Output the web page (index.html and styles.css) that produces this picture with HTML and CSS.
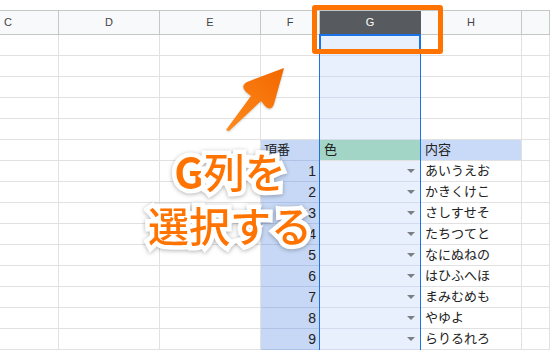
FILE: index.html
```html
<!DOCTYPE html>
<html lang="ja">
<head>
  <meta charset="UTF-8" />
  <meta name="viewport" content="width=device-width, initial-scale=1.0" />
  <title>G列を選択する</title>
  <link rel="stylesheet" href="styles.css">
</head>
<body>
  <div class="sheet">
    <div class="row head">
      <div class="cell">C</div><div class="cell">D</div><div class="cell">E</div>
      <div class="cell">F</div><div class="cell picked">G</div><div class="cell">H</div><div class="cell"></div>
    </div>
    <div class="row"><div class="cell"></div><div class="cell"></div><div class="cell"></div><div class="cell"></div><div class="cell sel"></div><div class="cell"></div><div class="cell"></div></div>
    <div class="row"><div class="cell"></div><div class="cell"></div><div class="cell"></div><div class="cell"></div><div class="cell sel"></div><div class="cell"></div><div class="cell"></div></div>
    <div class="row"><div class="cell"></div><div class="cell"></div><div class="cell"></div><div class="cell"></div><div class="cell sel"></div><div class="cell"></div><div class="cell"></div></div>
    <div class="row"><div class="cell"></div><div class="cell"></div><div class="cell"></div><div class="cell"></div><div class="cell sel"></div><div class="cell"></div><div class="cell"></div></div>
    <div class="row"><div class="cell"></div><div class="cell"></div><div class="cell"></div><div class="cell"></div><div class="cell sel"></div><div class="cell"></div><div class="cell"></div></div>
    <div class="row">
      <div class="cell"></div><div class="cell"></div><div class="cell"></div>
      <div class="cell blue">項番</div><div class="cell teal">色</div><div class="cell th">内容</div><div class="cell"></div>
    </div>
    <div class="row"><div class="cell"></div><div class="cell"></div><div class="cell"></div><div class="cell blue num">1</div><div class="cell sel drop"><i></i></div><div class="cell txt">あいうえお</div><div class="cell"></div></div>
    <div class="row"><div class="cell"></div><div class="cell"></div><div class="cell"></div><div class="cell blue num">2</div><div class="cell sel drop"><i></i></div><div class="cell txt">かきくけこ</div><div class="cell"></div></div>
    <div class="row"><div class="cell"></div><div class="cell"></div><div class="cell"></div><div class="cell blue num">3</div><div class="cell sel drop"><i></i></div><div class="cell txt">さしすせそ</div><div class="cell"></div></div>
    <div class="row"><div class="cell"></div><div class="cell"></div><div class="cell"></div><div class="cell blue num">4</div><div class="cell sel drop"><i></i></div><div class="cell txt">たちつてと</div><div class="cell"></div></div>
    <div class="row"><div class="cell"></div><div class="cell"></div><div class="cell"></div><div class="cell blue num">5</div><div class="cell sel drop"><i></i></div><div class="cell txt">なにぬねの</div><div class="cell"></div></div>
    <div class="row"><div class="cell"></div><div class="cell"></div><div class="cell"></div><div class="cell blue num">6</div><div class="cell sel drop"><i></i></div><div class="cell txt">はひふへほ</div><div class="cell"></div></div>
    <div class="row"><div class="cell"></div><div class="cell"></div><div class="cell"></div><div class="cell blue num">7</div><div class="cell sel drop"><i></i></div><div class="cell txt">まみむめも</div><div class="cell"></div></div>
    <div class="row"><div class="cell"></div><div class="cell"></div><div class="cell"></div><div class="cell blue num">8</div><div class="cell sel drop"><i></i></div><div class="cell txt">やゆよ</div><div class="cell"></div></div>
    <div class="row"><div class="cell"></div><div class="cell"></div><div class="cell"></div><div class="cell blue num">9</div><div class="cell sel drop"><i></i></div><div class="cell txt">らりるれろ</div><div class="cell"></div></div>
  </div>

  <!-- selection outline + active cell -->
  <div class="selection"></div>
  <div class="active"></div>

  <!-- annotation layer -->
  <div class="frame"></div>
  <svg class="arrow" width="550" height="350" viewBox="0 0 550 350">
    <defs>
      <linearGradient id="arrowFill" x1="226" y1="130" x2="284" y2="68" gradientUnits="userSpaceOnUse">
        <stop offset="0" stop-color="#ff8a1c" />
        <stop offset="1" stop-color="#f26800" />
      </linearGradient>
    </defs>
    <path d="M226,130 L251,96 L246,92 Q240,86 247,82 L284,68 L274,104 Q271,112 265,106 L261,101 L229,131 Z" fill="url(#arrowFill)" />
  </svg>
  <div class="callout"><b>G</b>列を<br>選択する</div>
</body>
</html>
```

FILE: styles.css
```css
* { box-sizing: border-box; }
body { margin: 0; width: 550px; height: 350px; overflow: hidden; position: relative; background: #fff; font-family: "Liberation Sans", "Noto Sans CJK JP", sans-serif; color: #222; }

.sheet { margin-top: 10px; margin-left: -42px; width: 592px; border-top: 1px solid #c4c7c5; }
.row { display: grid; grid-template-columns: 101px 101px 101px 59px 101px 101px 1fr; height: 21px; font-size: 13px; }
.cell { border-right: 1px solid #e1e1e1; border-bottom: 1px solid #e1e1e1; line-height: 20px; white-space: nowrap; overflow: hidden; }

.row.head { height: 24px; background: #f8f9fa; }
.head .cell { border-color: #c4c7c5; text-align: center; font-size: 11px; color: #444; line-height: 23px; }
.head .cell.picked { background: #575a5e; border-right-color: #575a5e; color: #fff; }

.sel { background: #e8f0fe; border-bottom-color: #d3dcee; }
.blue { background: #c6d8f5; border-bottom-color: #afc3e6; padding-left: 3px; }
.teal { background: #a2d5c6; padding-left: 4px; }
.th { background: #c9daf8; padding-left: 4px; }
.num { text-align: right; padding-right: 3px; font-size: 14px; }
.txt { padding-left: 4px; font-size: 13px; }
.drop { display: flex; justify-content: flex-end; align-items: center; padding-right: 5px; }
.drop i { width: 0; height: 0; border-left: 4px solid transparent; border-right: 4px solid transparent; border-top: 4px solid #7b7e82; }

.selection { position: absolute; left: 319px; top: 34px; width: 102px; height: 320px; border-left: 1px solid #1a73e8; border-right: 1px solid #1a73e8; }
.active { position: absolute; left: 319px; top: 34px; width: 102px; height: 20px; border: 2px solid #1a73e8; }

.frame { position: absolute; left: 312px; top: 5px; width: 131px; height: 49px; border: 5px solid #ff7300; border-radius: 3px; }
.arrow { position: absolute; left: 0; top: 0; pointer-events: none; filter: drop-shadow(0 1px 1px rgba(0,0,0,0.2)); }

.callout { position: absolute; left: 128px; top: 143px; width: 204px; text-align: center; font-family: "Noto Sans CJK JP", sans-serif; font-size: 41px; font-weight: 500; line-height: 54px; color: #ff7300; -webkit-text-stroke: 9px #fff; paint-order: stroke fill; filter: drop-shadow(0 1px 2px rgba(0,0,0,0.3)); }
.callout b { font-weight: 700; }
```
